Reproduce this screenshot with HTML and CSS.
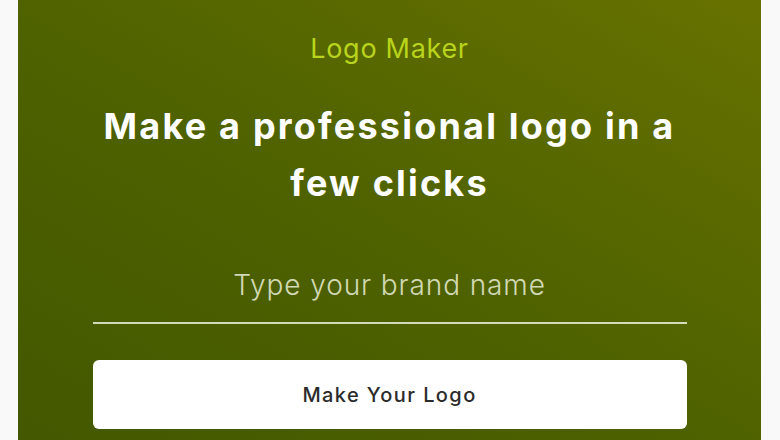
FILE: index.html
```html
<!DOCTYPE html>
<html lang="en">
<head>
  <meta charset="UTF-8" />
  <meta name="viewport" content="width=device-width, initial-scale=1.0" />
  <title>Logo Maker</title>
  <link rel="stylesheet" href="styles.css">
</head>
<body>
  <section class="hero">
    <p class="eyebrow">Logo Maker</p>
    <h1 class="title">Make a professional logo in a few clicks</h1>

    <div class="brand-form">
      <input type="text" class="brand-input" placeholder="Type your brand name">
      <button class="make-btn">Make Your Logo</button>
    </div>
  </section>
</body>
</html>
```

FILE: styles.css
```css
body {
  margin: 0;
  background-color: #f9f9f9;
  font-family: Inter, "Open Sans", sans-serif;
}

.hero {
  margin: 0 19px 0 18px;
  min-height: 440px;
  background: linear-gradient(30deg, #435800 0%, #4d6100 45%, #677200 100%);
  display: flex;
  flex-direction: column;
  align-items: center;
  padding-top: 32px;
  box-sizing: border-box;
}

.eyebrow {
  margin: 0;
  font-size: 27px;
  line-height: 34px;
  letter-spacing: 0.7px;
  color: #b9d41c;
}

.title {
  margin: 32px 0 0;
  width: 620px;
  font-size: 36px;
  line-height: 57px;
  font-weight: 700;
  letter-spacing: 2.2px;
  color: #fff;
  text-align: center;
}

.brand-form {
  width: 594px;
  margin-top: 56px;
  display: flex;
  flex-direction: column;
  gap: 36px;
}

.brand-input {
  width: 100%;
  padding: 0 0 20px;
  border: none;
  border-bottom: 2px solid rgba(235, 240, 215, 0.85);
  background: transparent;
  font-family: inherit;
  font-size: 28px;
  font-weight: 300;
  letter-spacing: 0.9px;
  color: #fff;
  text-align: center;
  outline: none;
}

.brand-input::placeholder {
  color: rgba(235, 240, 215, 0.85);
}

.make-btn {
  height: 69px;
  border: none;
  border-radius: 6px;
  background: #fff;
  font-family: inherit;
  font-size: 20px;
  font-weight: 500;
  letter-spacing: 1.4px;
  color: #2b2b2b;
  cursor: pointer;
}
```
